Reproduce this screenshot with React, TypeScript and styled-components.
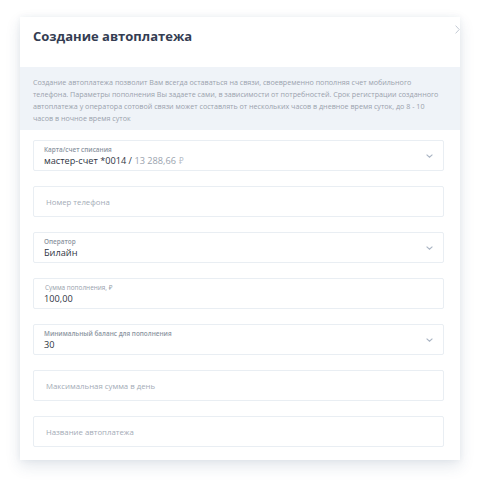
import React from "react";
import styled, { createGlobalStyle } from "styled-components";

const Global = createGlobalStyle`
  html, body { margin: 0; padding: 0; background: #ffffff; }
  body { font-family: "Open Sans", "Noto Sans", sans-serif; }
`;

const Page = styled.div`
  width: 480px;
  height: 480px;
  padding: 17px 20px 0 20px;
  box-sizing: border-box;
`;

const Card = styled.div`
  position: relative;
  width: 440px;
  background: #ffffff;
  box-shadow: 0 6px 14px rgba(40, 70, 110, 0.13), 0 0 6px rgba(40, 70, 110, 0.06);
  padding-bottom: 13px;
`;

const Header = styled.div`
  height: 50px;
  box-sizing: border-box;
  padding: 9px 13px 0 13px;
`;

const Title = styled.h1`
  margin: 0;
  font-size: 13px;
  line-height: 20px;
  font-weight: 700;
  color: #343d52;
`;

const Close = styled.div`
  position: absolute;
  top: 6px;
  right: -1px;
  width: 8px;
  height: 12px;
  display: flex;
  align-items: center;
  justify-content: center;
`;

const Info = styled.p`
  margin: 0;
  background: #eff3f8;
  padding: 9px 13px 6px 13px;
  font-size: 7.15px;
  line-height: 12px;
  color: #9aa2ad;
  white-space: nowrap;
`;

const Fields = styled.div`
  display: flex;
  flex-direction: column;
  gap: 15px;
  padding: 10px 16px 0 13px;
`;

const Field = styled.div`
  position: relative;
  height: 31px;
  box-sizing: border-box;
  border: 1px solid #e9eef3;
  border-radius: 2px;
  display: flex;
  align-items: center;
  padding: 0 30px 0 10px;
`;

const Stack = styled.div`
  display: flex;
  flex-direction: column;
  padding-top: 1px;
`;

const Label = styled.span<{ $light?: boolean }>`
  font-size: 6.4px;
  line-height: 9px;
  font-weight: ${(p) => (p.$light ? 400 : 600)};
  color: ${(p) => (p.$light ? "#97a0ab" : "#8c95a1")};
  margin-left: ${(p) => (p.$light ? "1px" : "0")};
`;

const Value = styled.span`
  font-size: 9.2px;
  line-height: 13px;
  color: #2f3644;
`;

const Muted = styled.span`
  color: #9aa3ae;
`;

const Rub = styled.span`
  color: #b5bcc6;
  margin-left: 3px;
  font-size: 8px;
`;

const Placeholder = styled.span`
  font-size: 7.8px;
  color: #a3abb6;
  margin-left: 2px;
`;

const Chevron = styled.svg`
  position: absolute;
  right: 10px;
  top: 50%;
  margin-top: -2px;
`;

const Down = () => (
  <Chevron width="7" height="4" viewBox="0 0 7 4">
    <path d="M0.6 0.6 L3.5 3.2 L6.4 0.6" fill="none" stroke="#a9b4c3" strokeWidth="1.1" />
  </Chevron>
);

export default function App() {
  return (
    <Page>
      <Global />
      <Card>
        <Close>
          <svg width="5" height="9" viewBox="0 0 5 9">
            <path d="M0.6 0.6 L4.2 4.5 L0.6 8.4" fill="none" stroke="#c3cad4" strokeWidth="1" />
          </svg>
        </Close>
        <Header>
          <Title>Создание автоплатежа</Title>
        </Header>
        <Info>
          Создание автоплатежа позволит Вам всегда оставаться на связи, своевременно пополняя счет мобильного
          <br />
          телефона. Параметры пополнения Вы задаете сами, в зависимости от потребностей. Срок регистрации созданного
          <br />
          автоплатежа у оператора сотовой связи может составлять от нескольких часов в дневное время суток, до 8 - 10
          <br />
          часов в ночное время суток
        </Info>
        <Fields>
          <Field>
            <Stack>
              <Label>Карта/счет списания</Label>
              <Value>
                мастер-счет *0014 / <Muted>13 288,66</Muted>
                <Rub>₽</Rub>
              </Value>
            </Stack>
            <Down />
          </Field>
          <Field>
            <Placeholder>Номер телефона</Placeholder>
          </Field>
          <Field>
            <Stack>
              <Label>Оператор</Label>
              <Value>Билайн</Value>
            </Stack>
            <Down />
          </Field>
          <Field>
            <Stack>
              <Label $light>Сумма пополнения, ₽</Label>
              <Value>100,00</Value>
            </Stack>
          </Field>
          <Field>
            <Stack>
              <Label>Минимальный баланс для пополнения</Label>
              <Value>30</Value>
            </Stack>
            <Down />
          </Field>
          <Field>
            <Placeholder>Максимальная сумма в день</Placeholder>
          </Field>
          <Field>
            <Placeholder>Название автоплатежа</Placeholder>
          </Field>
        </Fields>
      </Card>
    </Page>
  );
}
